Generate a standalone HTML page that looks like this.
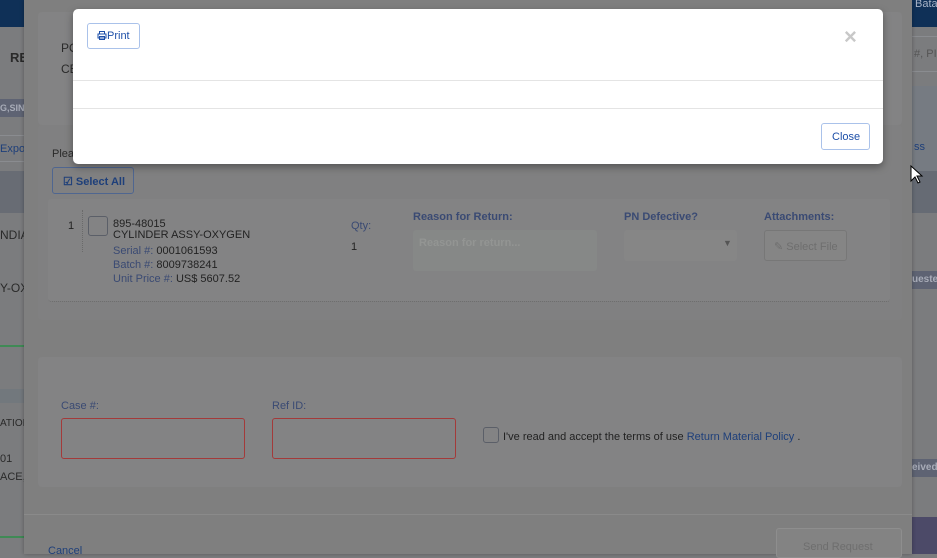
<!DOCTYPE html>
<html><head><meta charset="utf-8"><style>
*{box-sizing:border-box;margin:0;padding:0}
body{width:937px;height:554px;overflow:hidden;position:relative;background:#7b7c7e;font-family:"Liberation Sans",sans-serif;font-size:11px;color:#222}
.a{position:absolute}
.t{position:absolute;white-space:nowrap}
</style></head><body>
<div class="a" style="left:0;top:0;width:24px;height:27px;background:#0f3057"></div>
<div class="t" style="left:10px;top:50px;font-size:13px;font-weight:bold;color:#2a2a2a">RE</div>
<div class="a" style="left:0;top:99px;width:24px;height:18px;background:#5e6373"></div>
<div class="t" style="left:0;top:103px;font-size:9px;font-weight:bold;color:#a8acb8">G,SIN</div>
<div class="a" style="left:0;top:135px;width:24px;height:27px;border-top:1px solid #8a8c90;border-bottom:1px solid #8a8c90"></div>
<div class="t" style="left:0;top:143px;color:#1e3f7a">Expo</div>
<div class="a" style="left:0;top:171px;width:24px;height:42px;background:#686c74"></div>
<div class="t" style="left:0;top:228px;font-size:12px;color:#2a2a2a">NDIA</div>
<div class="t" style="left:0;top:281px;font-size:12px;color:#2a2a2a">Y-OX</div>
<div class="a" style="left:0;top:345px;width:24px;height:2px;background:#3f8a55"></div>
<div class="a" style="left:0;top:389px;width:24px;height:14px;background:#72787d"></div>
<div class="t" style="left:0;top:418px;font-size:10px;color:#2a2a2a">ATION</div>
<div class="t" style="left:0;top:453px;font-size:11px;color:#2a2a2a">01</div>
<div class="t" style="left:0;top:471px;font-size:11px;color:#2a2a2a">ACE,</div>
<div class="a" style="left:0;top:536px;width:24px;height:2px;background:#3f8a55"></div>
<div class="a" style="left:912px;top:0;width:25px;height:27px;background:#0f3057"></div>
<div class="t" style="left:915px;top:-2px;font-size:11px;color:#a8b4c8">Bata</div>
<div class="a" style="left:912px;top:36px;width:25px;height:36px;border-top:1px solid #8a8c90;border-bottom:1px solid #8a8c90"></div>
<div class="t" style="left:914px;top:48px;font-size:11px;color:#555">#, PI</div>
<div class="a" style="left:912px;top:86px;width:25px;height:126px;background:#767b82"></div>
<div class="t" style="left:914px;top:141px;color:#1e3f7a">ss</div>
<div class="a" style="left:912px;top:171px;width:25px;height:42px;background:#666b74"></div>
<div class="a" style="left:912px;top:271px;width:25px;height:18px;background:#5e6373"></div>
<div class="t" style="left:912px;top:274px;font-size:10px;font-weight:bold;color:#a8acb8">ueste</div>
<div class="a" style="left:912px;top:459px;width:25px;height:18px;background:#5e6373"></div>
<div class="t" style="left:912px;top:462px;font-size:10px;font-weight:bold;color:#a8acb8">eived</div>
<div class="a" style="left:912px;top:517px;width:25px;height:37px;background:#4c4a68"></div>
<div class="a" style="left:24px;top:0;width:888px;height:554px;background:#7f7f7f;box-shadow:0 0 4px rgba(0,0,0,.3)"></div>
<div class="a" style="left:38px;top:12px;width:864px;height:113px;background:#838384;border-radius:4px"></div>
<div class="t" style="left:61px;top:41px;font-size:12px;color:#2a2a2a">PO</div>
<div class="t" style="left:61px;top:62px;font-size:12px;color:#2a2a2a">CE</div>
<div class="a" style="left:38px;top:125px;width:864px;height:195px;background:#808081;border-radius:4px"></div>
<div class="t" style="left:52px;top:148px;font-size:11px;color:#2a2a2a">Plea</div>
<div class="a" style="left:52px;top:167px;width:82px;height:27px;border:1px solid #4f6690;border-radius:3px"></div>
<div class="t" style="left:63px;top:175px;font-size:11px;font-weight:bold;color:#1e3f7a">☑ Select All</div>
<div class="a" style="left:48px;top:199px;width:842px;height:103px;background:#838384;border-bottom:1px dotted #6a6a6a;border-radius:3px"></div>
<div class="t" style="left:68px;top:220px;color:#222">1</div>
<div class="a" style="left:82px;top:210px;width:0;height:42px;border-left:1px dotted #6a6a6a"></div>
<div class="a" style="left:88px;top:216px;width:20px;height:20px;border:1px solid #5b5f68;border-radius:3px"></div>
<div class="t" style="left:113px;top:219px;font-size:11px;color:#222;line-height:11px">895-48015<br>CYLINDER ASSY-OXYGEN</div>
<div class="t" style="left:113px;top:244px;font-size:11px;line-height:14px;color:#222"><span style="color:#3a4a73">Serial #:</span> 0001061593<br><span style="color:#3a4a73">Batch #:</span> 8009738241<br><span style="color:#3a4a73">Unit Price #:</span> US$ 5607.52</div>
<div class="t" style="left:351px;top:220px;color:#3a4a73">Qty:</div>
<div class="t" style="left:351px;top:241px;color:#222">1</div>
<div class="t" style="left:413px;top:211px;font-weight:bold;color:#3a4a73">Reason for Return:</div>
<div class="a" style="left:413px;top:230px;width:184px;height:41px;background:#868887;border-radius:3px"></div>
<div class="t" style="left:419px;top:237px;font-weight:bold;color:#939593">Reason for return...</div>
<div class="t" style="left:624px;top:211px;font-weight:bold;color:#3a4a73">PN Defective?</div>
<div class="a" style="left:624px;top:230px;width:113px;height:31px;background:#868686;border-radius:3px"></div>
<div class="t" style="left:723px;top:238px;font-size:9px;color:#555">▼</div>
<div class="t" style="left:764px;top:211px;font-weight:bold;color:#3a4a73">Attachments:</div>
<div class="a" style="left:764px;top:230px;width:83px;height:31px;background:#858585;border:1px solid #777;border-radius:3px"></div>
<div class="t" style="left:774px;top:240px;color:#6e6e6e">✎ Select File</div>
<div class="a" style="left:38px;top:357px;width:864px;height:130px;background:#838384;border-radius:4px"></div>
<div class="t" style="left:61px;top:400px;color:#3a4a73">Case #:</div>
<div class="t" style="left:272px;top:400px;color:#3a4a73">Ref ID:</div>
<div class="a" style="left:61px;top:418px;width:184px;height:41px;border:1px solid #a33a3a;border-radius:3px"></div>
<div class="a" style="left:272px;top:418px;width:184px;height:41px;border:1px solid #a33a3a;border-radius:3px"></div>
<div class="a" style="left:483px;top:427px;width:16px;height:16px;border:1px solid #5b5f68;border-radius:3px"></div>
<div class="t" style="left:503px;top:431px;color:#222">I've read and accept the terms of use <span style="color:#1e3f7a">Return Material Policy</span> .</div>
<div class="a" style="left:24px;top:514px;width:888px;height:1px;background:#8a8a8a"></div>
<div class="t" style="left:48px;top:545px;color:#1e3f7a">Cancel</div>
<div class="a" style="left:776px;top:528px;width:126px;height:30px;border:1px solid #8e8e8e;border-radius:3px;background:#838383"></div>
<div class="t" style="left:803px;top:541px;color:#6e6e6e">Send Request</div>
<div class="a" style="left:73px;top:9px;width:810px;height:155px;background:#fff;border-radius:5px;box-shadow:0 3px 8px rgba(0,0,0,.35)">
 <div class="a" style="left:14px;top:14px;width:53px;height:26px;border:1px solid #aac2ea;border-radius:3px"></div>
 <div class="t" style="left:24px;top:21px;font-size:11px;color:#1d4fa8"><svg width="10" height="9" viewBox="0 0 10 9" style="vertical-align:-1px"><path d="M2.5 3V.5h5V3M1 3h8v4H1zM2.5 5.5h5v3h-5z" fill="none" stroke="#1d4fa8" stroke-width="1"/></svg>Print</div>
 <div class="t" style="left:771px;top:15px;font-size:22px;font-weight:bold;color:#c8c8c8">×</div>
 <div class="a" style="left:0;top:71px;width:810px;height:1px;background:#e4e4e4"></div>
 <div class="a" style="left:0;top:99px;width:810px;height:1px;background:#e4e4e4"></div>
 <div class="a" style="left:748px;top:114px;width:49px;height:27px;border:1px solid #aac2ea;border-radius:3px"></div>
 <div class="t" style="left:759px;top:122px;font-size:11px;color:#1d4fa8">Close</div>
</div>
<svg class="a" style="left:910px;top:165px" width="14" height="20" viewBox="0 0 14 20"><path d="M1 1v15l4-4 3 6 2-1-3-6h5z" fill="#fff" stroke="#000" stroke-width="1"/></svg>
</body></html>
